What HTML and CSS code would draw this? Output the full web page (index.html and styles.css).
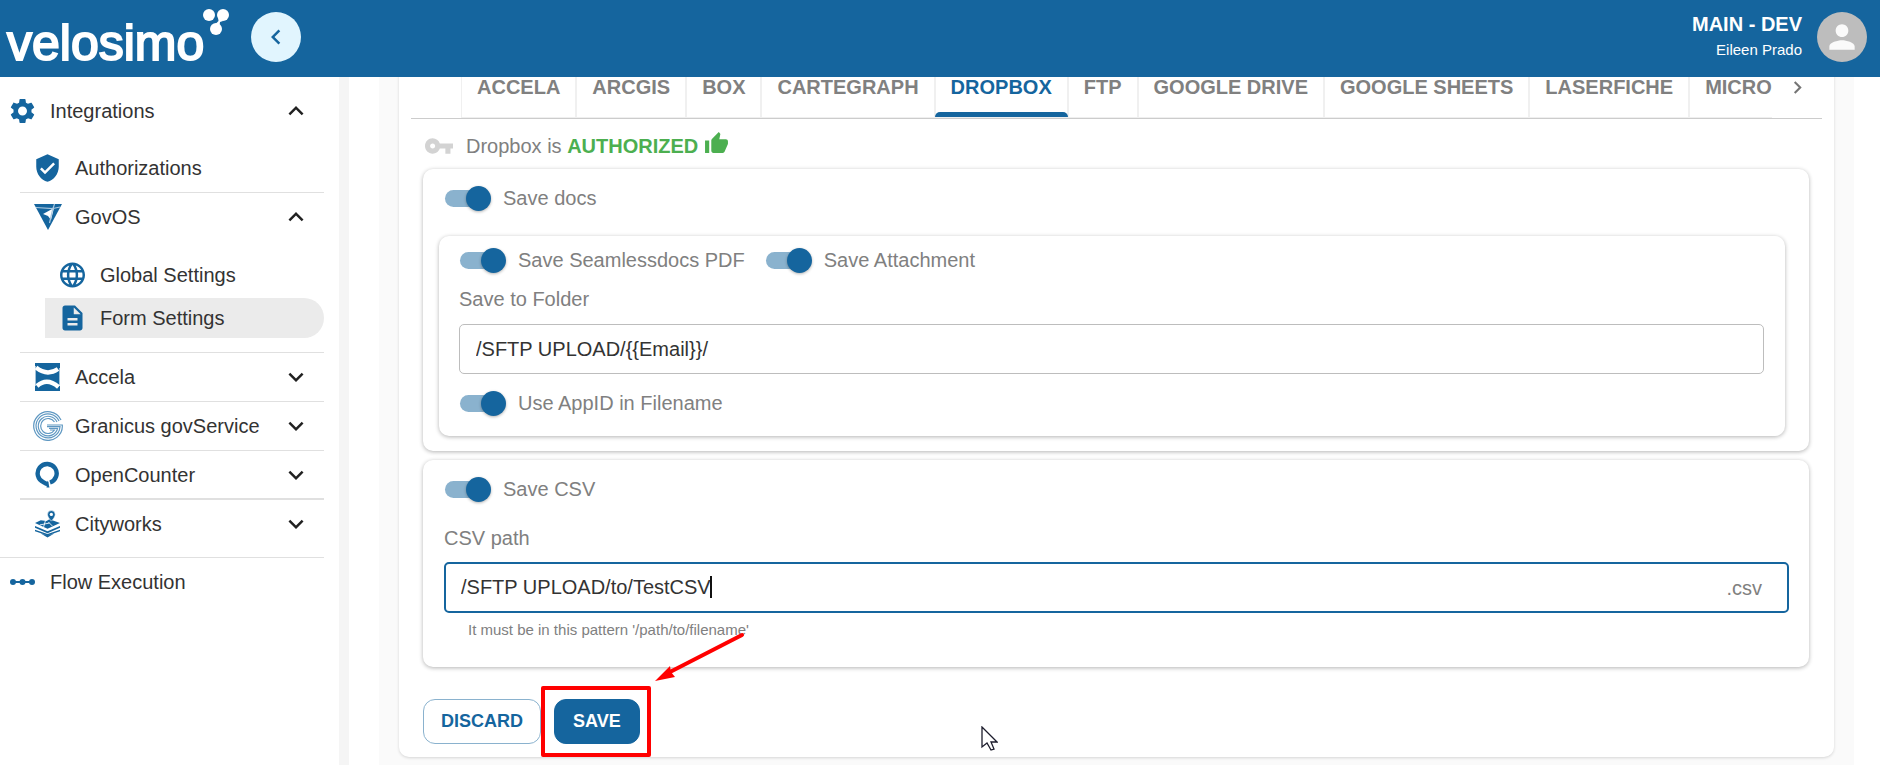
FILE: index.html
```
<!DOCTYPE html>
<html lang="en">
  <head>
    <meta charset="UTF-8" />
    <meta name="viewport" content="width=device-width, initial-scale=1.0" />
    <title>Velosimo - Form Settings</title>
    <link rel="stylesheet" href="styles.css">
  </head>

  <body>
    <header class="topbar">
      <a class="logo" href="#">velosimo<svg class="logo-mark" width="28" height="28" viewBox="0 0 28 28" fill="#fff"><circle cx="7" cy="7" r="6" /><circle cx="21" cy="7" r="6" /><circle cx="14" cy="21" r="6" /><path d="M16 8l5 5-3 1-.5 4-5-1 4-4z" /></svg></a>
      <button type="button" class="collapse" aria-label="Collapse menu">
        <svg width="30" height="30" viewBox="0 0 24 24" fill="#15659e"><path d="M15.4 7.4L14 6l-6 6 6 6 1.4-1.4L10.8 12z" /></svg>
      </button>
      <div class="user">
        <strong class="tenant">MAIN - DEV</strong>
        <span class="username">Eileen Prado</span>
      </div>
      <button type="button" class="avatar" aria-label="Account">
        <svg width="38" height="38" viewBox="0 0 24 24" fill="#fafafa"><path d="M12 12c2.2 0 4-1.8 4-4s-1.8-4-4-4-4 1.8-4 4 1.8 4 4 4zm0 2c-2.7 0-8 1.3-8 4v2h16v-2c0-2.7-5.3-4-8-4z" /></svg>
      </button>
    </header>

    <div class="layout">
      <nav class="sidebar">
        <a class="item root" href="#">
          <svg class="icon" viewBox="2 2 20 20"><path d="M19.14 12.94c.04-.3.06-.61.06-.94 0-.32-.02-.64-.07-.94l2.03-1.58c.18-.14.23-.41.12-.61l-1.92-3.32c-.12-.22-.37-.29-.59-.22l-2.39.96c-.5-.38-1.03-.7-1.62-.94l-.36-2.54c-.04-.24-.24-.41-.48-.41h-3.84c-.24 0-.43.17-.47.41l-.36 2.54c-.59.24-1.13.57-1.62.94l-2.39-.96c-.22-.08-.47 0-.59.22L2.74 8.87c-.12.21-.08.47.12.61l2.03 1.58c-.05.3-.09.63-.09.94s.02.64.07.94l-2.03 1.58c-.18.14-.23.41-.12.61l1.92 3.32c.12.22.37.29.59.22l2.39-.96c.5.38 1.03.7 1.62.94l.36 2.54c.05.24.24.41.48.41h3.84c.24 0 .44-.17.47-.41l.36-2.54c.59-.24 1.13-.56 1.62-.94l2.39.96c.22.08.47 0 .59-.22l1.92-3.32c.12-.22.07-.47-.12-.61l-2.01-1.58zM12 15.6c-1.98 0-3.6-1.62-3.6-3.6s1.62-3.6 3.6-3.6 3.6 1.62 3.6 3.6-1.62 3.6-3.6 3.6z" /></svg>
          <span>Integrations</span>
          <svg class="chevron" viewBox="0 0 24 24"><path d="M12 8l-6 6 1.4 1.4 4.6-4.6 4.6 4.6L18 14z" /></svg>
        </a>

        <div class="group">
          <a class="item" href="#">
            <svg class="icon" viewBox="2 1 20 22"><path d="M12 1L3 5v6c0 5.55 3.84 10.74 9 12 5.16-1.26 9-6.45 9-12V5l-9-4zm-2 16l-4-4 1.41-1.41L10 14.17l6.59-6.59L18 9l-8 8z" /></svg>
            <span>Authorizations</span>
          </a>
          <div class="divided">
            <a class="item last" href="#">
              <svg class="icon wide" viewBox="0 0 30 30" fill="#15659e"><path d="M1 2h28L15 28z" /><path d="M10 12l11-6-3 12-3-4z" fill="#fff" /><path d="M3 5.5l17 1 1.500-4.500M20 6.500l7-1.500M20 6l-3.500 15" fill="none" stroke="#a9c7df" stroke-width="1.200" /></svg>
              <span>GovOS</span>
              <svg class="chevron" viewBox="0 0 24 24"><path d="M12 8l-6 6 1.4 1.4 4.6-4.6 4.6 4.6L18 14z" /></svg>
            </a>
            <div class="subgroup">
              <a class="subitem" href="#">
                <svg class="icon" viewBox="2 2 20 20"><path d="M11.99 2C6.47 2 2 6.48 2 12s4.47 10 9.99 10C17.52 22 22 17.52 22 12S17.52 2 11.99 2zm6.93 6h-2.95c-.32-1.25-.78-2.45-1.38-3.56 1.84.63 3.37 1.91 4.33 3.56zM12 4.04c.83 1.2 1.48 2.53 1.91 3.96h-3.82c.43-1.43 1.08-2.76 1.91-3.96zM4.26 14C4.1 13.36 4 12.69 4 12s.1-1.36.26-2h3.38c-.08.66-.14 1.32-.14 2s.06 1.34.14 2H4.26zm.82 2h2.95c.32 1.25.78 2.45 1.38 3.56-1.84-.63-3.37-1.9-4.33-3.56zm2.95-8H5.08c.96-1.66 2.49-2.93 4.33-3.56C8.81 5.55 8.35 6.75 8.03 8zM12 19.96c-.83-1.2-1.48-2.53-1.91-3.96h3.82c-.43 1.43-1.08 2.76-1.91 3.96zM14.34 14H9.66c-.09-.66-.16-1.32-.16-2s.07-1.35.16-2h4.68c.09.65.16 1.32.16 2s-.07 1.34-.16 2zm.25 5.56c.6-1.11 1.06-2.31 1.38-3.56h2.95c-.96 1.65-2.49 2.93-4.33 3.56zM16.36 14c.08-.66.14-1.32.14-2s-.06-1.34-.14-2h3.38c.16.64.26 1.31.26 2s-.1 1.36-.26 2h-3.38z" /></svg>
                <span>Global Settings</span>
              </a>
              <a class="subitem active" href="#">
                <svg class="icon" viewBox="2 2 20 20"><path d="M14 2H6c-1.1 0-2 .9-2 2v16c0 1.1.89 2 1.99 2H18c1.1 0 2-.9 2-2V8l-6-6zm2 16H8v-2h8v2zm0-4H8v-2h8v2zm-3-5V3.5L18.5 9H13z" /></svg>
                <span>Form Settings</span>
              </a>
            </div>
          </div>
          <a class="item" href="#">
            <svg class="icon" viewBox="0 0 25 28"><path d="M0 0h25v28H0z" /><path d="M1 4.500q11 9 22 1.500M2 23q10-9 21.500 1" fill="none" stroke="#fff" stroke-width="4.400" /><path d="M0 3v20M25 5v18" stroke="#fff" stroke-width="1.200" /></svg>
            <span>Accela</span>
            <svg class="chevron" viewBox="0 0 24 24"><path d="M16.6 8.6L12 13.2 7.4 8.6 6 10l6 6 6-6z" /></svg>
          </a>
          <a class="item" href="#">
            <svg class="icon wide" viewBox="0 0 30 30"><g fill="none" stroke="#5f98c2" stroke-width="1.2"><path d="M28 9A14.300 14.300 0 1 0 29.300 14H14" /><path d="M26 10A12 12 0 1 0 27 15.700H14" /><path d="M24 11A9.800 9.800 0 1 0 24.600 17.400H16" /><path d="M21.500 11A7.500 7.500 0 1 0 21.500 19H17" /></g></svg>
            <span>Granicus govService</span>
            <svg class="chevron" viewBox="0 0 24 24"><path d="M16.6 8.6L12 13.2 7.4 8.6 6 10l6 6 6-6z" /></svg>
          </a>
          <a class="item heavy" href="#">
            <svg class="icon" viewBox="0 0 25 28"><path d="M15 21.500A9.500 9.500 0 1 0 8.500 21.200Q11 23 13.500 23" fill="none" stroke="#15659e" stroke-width="4.400" /><path d="M12.500 19.500l2 7h-3z" /></svg>
            <span>OpenCounter</span>
            <svg class="chevron" viewBox="0 0 24 24"><path d="M16.6 8.6L12 13.2 7.4 8.6 6 10l6 6 6-6z" /></svg>
          </a>
          <a class="item last" href="#">
            <svg class="icon" viewBox="0 0 26 28"><path d="M0 13l6-3 6 1 3-2 11 4-13 6z" /><path d="M0 16l13 5.500L26 16v1.800L13 23.500 0 17.800zM0 20l13 4.500L26 20v1.500L13 26 0 21.500zM6 24l7 2 7-2-7 4z" /><path d="M17 0a4 4 0 0 1 4 4c0 3-4 7-4 7s-4-4-4-7a4 4 0 0 1 4-4z" stroke="#fff" stroke-width=".6" /><circle cx="17" cy="4" r="1.7" fill="#fff" /><path d="M11 10l-2 7M5 15l10-2M14 12l4 4" stroke="#fff" stroke-width=".9" /></svg>
            <span>Cityworks</span>
            <svg class="chevron" viewBox="0 0 24 24"><path d="M16.6 8.6L12 13.2 7.4 8.6 6 10l6 6 6-6z" /></svg>
          </a>
        </div>

        <a class="item root flow" href="#">
          <svg class="icon" viewBox="0 0 25 25"><circle cx="3" cy="12.5" r="3" /><circle cx="12.5" cy="12.5" r="3" /><circle cx="22" cy="12.5" r="3" /><path d="M3 11.5h19v2H3z" /></svg>
          <span>Flow Execution</span>
        </a>
      </nav>

      <main class="content">
        <section class="panel">
          <div class="tabbar">
            <div class="tabs" role="tablist">
              <button type="button" class="tab" role="tab">ACCELA</button>
              <button type="button" class="tab" role="tab">ARCGIS</button>
              <button type="button" class="tab" role="tab">BOX</button>
              <button type="button" class="tab" role="tab">CARTEGRAPH</button>
              <button type="button" class="tab selected" role="tab" aria-selected="true">DROPBOX</button>
              <button type="button" class="tab" role="tab">FTP</button>
              <button type="button" class="tab" role="tab">GOOGLE DRIVE</button>
              <button type="button" class="tab" role="tab">GOOGLE SHEETS</button>
              <button type="button" class="tab" role="tab">LASERFICHE</button>
              <button type="button" class="tab" role="tab">MICROSOFT</button>
            </div>
            <button type="button" class="scroll" aria-label="Next tabs">
              <svg width="25" height="25" viewBox="0 0 24 24" fill="#757575"><path d="M8.6 16.6L13.2 12 8.6 7.4 10 6l6 6-6 6z" /></svg>
            </button>
          </div>

          <div class="panel-body">
            <p class="status">
              <svg class="key" width="28" height="16" viewBox="1 6 22 12" fill="#d3d3d3"><path d="M12.65 10C11.83 7.67 9.61 6 7 6c-3.31 0-6 2.69-6 6s2.69 6 6 6c2.61 0 4.83-1.67 5.65-4H17v4h4v-4h2v-4H12.65zM7 14c-1.1 0-2-.9-2-2s.9-2 2-2 2 .9 2 2-.9 2-2 2z" /></svg>
              <span>Dropbox is <strong class="authorized">AUTHORIZED</strong></span>
              <svg class="thumb" width="25" height="25" viewBox="0 0 24 24" fill="#4caf50"><path d="M1 21h4V9H1v12zm22-11c0-1.1-.9-2-2-2h-6.31l.95-4.57.03-.32c0-.41-.17-.79-.44-1.06L14.17 1 7.59 7.59C7.22 7.95 7 8.45 7 9v10c0 1.1.9 2 2 2h9c.83 0 1.54-.5 1.84-1.22l3.02-7.05c.09-.23.14-.47.14-.73v-2z" /></svg>
            </p>

            <div class="card docs">
              <div class="switches">
                <label class="switch"><input type="checkbox" checked />Save docs</label>
              </div>
              <div class="card inner">
                <div class="switches">
                  <label class="switch"><input type="checkbox" checked />Save Seamlessdocs PDF</label>
                  <label class="switch"><input type="checkbox" checked />Save Attachment</label>
                </div>
                <label class="field-label" for="folder">Save to Folder</label>
                <div class="field">
                  <input type="text" id="folder" value="/SFTP UPLOAD/{{Email}}/" />
                </div>
                <div class="switches appid">
                  <label class="switch"><input type="checkbox" checked />Use AppID in Filename</label>
                </div>
              </div>
            </div>

            <div class="card csv">
              <div class="switches">
                <label class="switch"><input type="checkbox" checked />Save CSV</label>
              </div>
              <label class="field-label csv-label" for="csvpath">CSV path</label>
              <div class="field focused">
                <input type="text" id="csvpath" value="/SFTP UPLOAD/to/TestCSV" />
                <span class="caret"></span>
                <span class="suffix">.csv</span>
              </div>
              <p class="helper">It must be in this pattern '/path/to/filename'</p>
            </div>

            <div class="actions">
              <button type="button" class="btn discard">DISCARD</button>
              <div class="save-wrap">
                <button type="button" class="btn save">SAVE</button>
                <span class="highlight"></span>
                <svg class="arrow" width="94" height="54" viewBox="0 0 94 54"><path d="M89 5L15 43" stroke="#f00" stroke-width="4" stroke-linecap="round" /><path d="M2 51l15-15 1 6 4 5z" fill="#f00" /></svg>
              </div>
            </div>
          </div>
        </section>
      </main>
    </div>

    <svg class="pointer" width="17" height="26" viewBox="0 0 17 26"><path d="M1 1v20l5-4 4 7 3-1-3-7h6z" fill="#fff" stroke="#1c1c2c" stroke-width="1.3" /></svg>
  </body>
</html>
```
FILE: styles.css
```
* {
  box-sizing: border-box;
}

body {
  margin: 0;
  height: 100vh;
  display: flex;
  flex-direction: column;
  overflow: hidden;
  background-color: #fff;
  color: #333;
  font-family: "Liberation Sans", Arial, sans-serif;
  font-size: 20px;
  line-height: 24px;
}

button,
input {
  font-family: inherit;
  font-size: inherit;
}

button {
  padding: 0;
  border: none;
  background: none;
  cursor: pointer;
}

a {
  color: inherit;
  text-decoration: none;
}

p {
  margin: 0;
}

/* header */
.topbar {
  flex: none;
  display: flex;
  align-items: center;
  height: 77px;
  padding: 0 13px 3px 7px;
  background-color: #15659e;
  color: #fff;
}

.logo {
  position: relative;
  width: 244px;
  padding-top: 12px;
  font-size: 50px;
  line-height: 56px;
  -webkit-text-stroke: 2px #fff;
}

.logo-mark {
  position: absolute;
  left: 195px;
  top: 5px;
}

.collapse,
.avatar {
  display: flex;
  align-items: center;
  justify-content: center;
  width: 50px;
  height: 50px;
  border-radius: 50%;
}

.collapse {
  background-color: #e1f5fe;
}

.avatar {
  background-color: #bdbdbd;
}

.user {
  display: flex;
  flex-direction: column;
  align-items: flex-end;
  gap: 2px;
  margin: 0 15px 0 auto;
}

.username {
  font-size: 15px;
}

/* sidebar */
.layout {
  flex: 1;
  display: flex;
  min-height: 0;
}

.sidebar {
  flex: none;
  width: 349px;
  padding: 10px 15px 0 0;
  border-right: 10px solid #f5f5f5;
}

.item,
.subitem {
  display: flex;
  align-items: center;
  gap: 15px;
}

.item {
  height: 49px;
  padding: 0 15px;
  border-bottom: 1px solid #e0e0e0;
}

.item.root {
  height: 48px;
  padding-left: 10px;
  border-bottom: none;
}

.item.last {
  height: 48px;
  border-bottom: none;
}

.item.heavy {
  border-bottom-width: 2px;
}

.icon {
  flex: none;
  width: 25px;
  height: 28px;
  fill: #15659e;
}

.icon.wide {
  width: 30px;
  height: 30px;
  margin: 0 -3px 0 -2px;
}

.chevron {
  width: 30px;
  height: 30px;
  margin: 0 -2px 0 auto;
  fill: #212121;
}

.group {
  margin: 9px 0 0 20px;
}

.divided {
  border-bottom: 1px solid #e0e0e0;
}

.subgroup {
  display: flex;
  flex-direction: column;
  gap: 3px;
  padding: 14px 0 14px 25px;
}

.subitem {
  height: 40px;
  padding-left: 15px;
  border-radius: 0 20px 20px 0;
}

.subitem.active {
  background-color: #ebebeb;
}

.sidebar .flow {
  margin-top: 9px;
  height: 49px;
  border-top: 1px solid #e0e0e0;
}

/* content */
.content {
  flex: 1;
  min-width: 0;
  margin: 0 26px 0 30px;
  padding: 0 20px;
  overflow: hidden;
  background-color: #fafafa;
}

.panel {
  margin-top: -20px;
  border-radius: 10px;
  background-color: #fff;
  box-shadow: 0 1px 3px rgba(0, 0, 0, 0.15);
}

.tabbar {
  display: flex;
  margin: 0 12px;
  padding-left: 50px;
  border-bottom: 1px solid #ccc;
}

.tabs {
  flex: 1;
  display: flex;
  min-width: 0;
  overflow: hidden;
  border-bottom: 1px solid #efefef;
}

.tab {
  flex: none;
  height: 60px;
  padding: 0 15px;
  border: 1px solid #f0f0f0;
  border-width: 0 1px;
  color: #808080;
  font-weight: bold;
  font-kerning: none;
}

.tab.selected {
  position: relative;
  color: #15659e;
}

.tab.selected::after {
  content: "";
  position: absolute;
  left: -1px;
  right: -1px;
  bottom: 0;
  height: 5px;
  border-radius: 5px 5px 0 0;
  background-color: #15659e;
}

.scroll {
  width: 50px;
}

.scroll svg {
  display: block;
  margin: auto;
}

.panel-body {
  padding: 0 25px 13px 24px;
  color: #808080;
}

.status {
  display: flex;
  align-items: center;
  height: 50px;
  padding: 4px 0 0 2px;
}

.key {
  margin-right: 13px;
}

.authorized {
  color: #4caf50;
}

.thumb {
  margin: 0 0 6px 6px;
}

.card {
  border-radius: 10px;
  background-color: #fff;
  box-shadow: 0 1px 4px rgba(0, 0, 0, 0.3);
}

.docs {
  padding: 10px 24px 15px 16px;
}

.docs > .switches {
  padding-left: 6px;
}

.inner {
  margin-top: 19px;
  padding: 5px 21px 14px 20px;
}

.switches {
  display: flex;
  align-items: center;
  gap: 21px;
  height: 38px;
  padding-left: 1px;
}

.appid {
  margin-top: 10px;
}

.switch {
  display: flex;
  align-items: center;
  gap: 12px;
}

.switch input {
  appearance: none;
  position: relative;
  width: 46px;
  height: 25px;
  margin: 0;
}

.switch input::before,
.switch input::after {
  content: "";
  position: absolute;
}

.switch input::before {
  left: 0;
  top: 4px;
  width: 42px;
  height: 17px;
  border-radius: 9px;
  background-color: #8ab2ce;
}

.switch input::after {
  right: 0;
  top: 0;
  width: 25px;
  height: 25px;
  border-radius: 50%;
  background-color: #15659e;
  box-shadow: 0 1px 3px rgba(0, 0, 0, 0.3);
}

.field-label {
  display: block;
  padding: 8px 0;
}

.field {
  position: relative;
  display: flex;
  align-items: center;
  height: 50px;
  margin-top: 5px;
  padding: 0 16px;
  border: 1px solid #bdbdbd;
  border-radius: 5px;
}

.field.focused {
  height: 51px;
  margin-top: 4px;
  padding: 0 25px 0 15px;
  border: 2px solid #15659e;
}

.field input {
  flex: 1;
  min-width: 0;
  padding: 0;
  border: none;
  outline: none;
  background: none;
  color: #333;
}

/* text cursor at the end of the value */
.caret {
  position: absolute;
  left: 264px;
  top: 12px;
  width: 2px;
  height: 22px;
  background-color: #111;
}

.csv {
  margin-top: 9px;
  padding: 10px 20px 25px 21px;
}

.csv-label {
  margin-top: 10px;
}

.helper {
  margin: 5px 0 0 24px;
  font-size: 15px;
}

.actions {
  display: flex;
  gap: 13px;
  margin-top: 32px;
}

.btn {
  height: 45px;
  padding: 0 18px;
  border: 1px solid #15659e;
  border-radius: 12px;
  font-size: 18px;
  font-weight: bold;
}

.discard {
  padding: 0 17px;
  border-color: #8ab2ce;
  color: #15659e;
}

.save {
  background-color: #15659e;
  color: #fff;
}

.save-wrap {
  position: relative;
}

.highlight {
  position: absolute;
  inset: -13px -11px -13px -13px;
  border: 4px solid #f00;
  border-radius: 2px;
}

.arrow {
  position: absolute;
  left: 99px;
  top: -69px;
}

.pointer {
  position: absolute;
  left: 981px;
  top: 726px;
}
```
